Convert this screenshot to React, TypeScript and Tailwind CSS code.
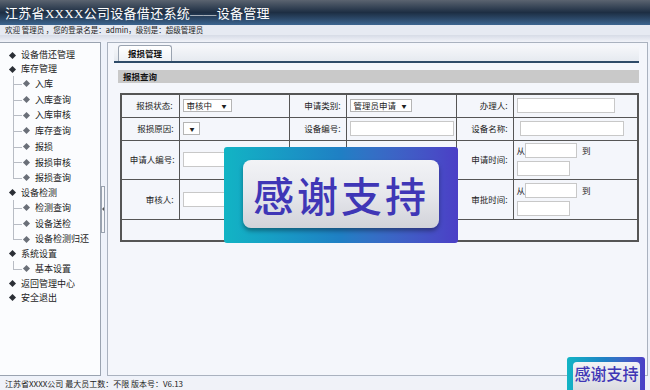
import React from "react";

const font = { fontFamily: '"Noto Sans CJK SC", "Liberation Sans", sans-serif' };

interface MenuNode {
  label: string;
  children?: string[];
}

const menu: MenuNode[] = [
  { label: "设备借还管理" },
  {
    label: "库存管理",
    children: ["入库", "入库查询", "入库审核", "库存查询", "报损", "报损审核", "报损查询"],
  },
  { label: "设备检测", children: ["检测查询", "设备送检", "设备检测归还"] },
  { label: "系统设置", children: ["基本设置"] },
  { label: "返回管理中心" },
  { label: "安全退出" },
];

function Diamond({ small }: { small?: boolean }) {
  return (
    <span
      className={
        small
          ? "inline-block w-[5px] h-[5px] rotate-45 bg-[#6a6f78]"
          : "inline-block w-[5px] h-[5px] rotate-45 bg-[#2b2f36]"
      }
    />
  );
}

function Sidebar() {
  return (
    <div className="w-[106px] h-full bg-[#fbfcfe] border border-[#9aa3b0] border-l-0 pt-[5px] pl-[10px]">
      {menu.map((m) => (
        <div key={m.label}>
          <div className="h-[14px] flex items-center gap-[6px] text-[9px] text-[#222]">
            <Diamond />
            <span>{m.label}</span>
          </div>
          {m.children && (
            <div className="ml-[3px]">
              {m.children.map((c, i) => {
                const last = i === m.children!.length - 1;
                return (
                  <div key={c} className="relative h-[15.7px] flex items-center pl-[11px] gap-[6px] text-[9px] text-[#222]">
                    <span
                      className={
                        last
                          ? "absolute left-0 top-0 h-[8px] border-l border-[#b8bcc4]"
                          : "absolute left-0 top-0 h-full border-l border-[#b8bcc4]"
                      }
                    />
                    <span className="absolute left-0 top-[8px] w-[9px] border-t border-[#b8bcc4]" />
                    <Diamond small />
                    <span>{c}</span>
                  </div>
                );
              })}
            </div>
          )}
        </div>
      ))}
    </div>
  );
}

function Select({ text, w }: { text: string; w: string }) {
  return (
    <div className={`${w} h-[13px] border border-[#b5b5b5] bg-white flex items-center justify-between pl-[3px] pr-[4px] text-[8.5px] text-[#222]`}>
      <span>{text}</span>
      <span className="text-[5px]">▼</span>
    </div>
  );
}

function Input({ w }: { w: string }) {
  return <div className={`${w} h-[15px] border border-[#c8c8c8] bg-white`} />;
}

function Range() {
  return (
    <div className="flex flex-col gap-[3px] pl-[3px] text-[8.5px] text-[#222]">
      <div className="flex items-center">
        <span>从</span>
        <Input w="w-[52px]" />
        <span className="ml-[5px]">到</span>
      </div>
      <Input w="w-[53px]" />
    </div>
  );
}

const td = "border border-[#555] text-[8.5px] text-[#222]";

function QueryTable() {
  return (
    <table className="w-[517px] border-collapse border-2 border-[#555] ml-[2px] mt-[10px] table-fixed">
      <colgroup>
        <col className="w-[58px]" />
        <col className="w-[110px]" />
        <col className="w-[57px]" />
        <col className="w-[110px]" />
        <col className="w-[57px]" />
        <col className="w-[125px]" />
      </colgroup>
      <tbody>
        <tr className="h-[23px]">
          <td className={`${td} text-right pr-[6px]`}>报损状态:</td>
          <td className={`${td} pl-[3px]`}>
            <Select text="审核中" w="w-[49px]" />
          </td>
          <td className={`${td} text-right pr-[5px]`}>申请类别:</td>
          <td className={`${td} pl-[3px]`}>
            <Select text="管理员申请" w="w-[62px]" />
          </td>
          <td className={`${td} text-right pr-[5px]`}>办理人:</td>
          <td className={`${td} pl-[3px]`}>
            <Input w="w-[98px]" />
          </td>
        </tr>
        <tr className="h-[23px]">
          <td className={`${td} text-right pr-[5px]`}>报损原因:</td>
          <td className={`${td} pl-[3px]`}>
            <Select text="" w="w-[17px]" />
          </td>
          <td className={`${td} text-right pr-[5px]`}>设备编号:</td>
          <td className={`${td} pl-[3px]`}>
            <Input w="w-[104px]" />
          </td>
          <td className={`${td} text-right pr-[5px]`}>设备名称:</td>
          <td className={`${td} pl-[6px]`}>
            <Input w="w-[104px]" />
          </td>
        </tr>
        <tr className="h-[39px]">
          <td className={`${td} text-right pr-[4px]`}>申请人编号:</td>
          <td className={`${td} pl-[3px]`}>
            <Input w="w-[104px]" />
          </td>
          <td className={td} />
          <td className={td} />
          <td className={`${td} text-right pr-[5px]`}>申请时间:</td>
          <td className={td}>
            <Range />
          </td>
        </tr>
        <tr className="h-[40px]">
          <td className={`${td} text-right pr-[5px]`}>审核人:</td>
          <td className={`${td} pl-[3px]`}>
            <Input w="w-[104px]" />
          </td>
          <td className={td} />
          <td className={td} />
          <td className={`${td} text-right pr-[5px]`}>审批时间:</td>
          <td className={td}>
            <Range />
          </td>
        </tr>
        <tr className="h-[22px]">
          <td className={td} colSpan={6} />
        </tr>
      </tbody>
    </table>
  );
}

function ThanksBadge({ big }: { big?: boolean }) {
  return big ? (
    <div className="absolute left-[224px] top-[147px] w-[234px] h-[96px] rounded-[3px] bg-gradient-to-r from-[#12b4c4] via-[#1f7fc4] to-[#4b3ec6] p-[13px_19px_15px_19px]">
      <div className="w-full h-full rounded-[8px] bg-gradient-to-b from-[#f2f3f6] via-[#e6e7ec] to-[#d2d3d9] shadow-[0_3px_4px_rgba(0,0,0,0.35)] flex items-center justify-center">
        <span className="text-[41px] leading-none font-medium text-[#3f36b6] tracking-[3px]">感谢支持</span>
      </div>
    </div>
  ) : (
    <div className="absolute left-[567px] top-[357px] w-[78px] h-[40px] rounded-[3px] bg-gradient-to-r from-[#12b4c4] via-[#1f7fc4] to-[#4b3ec6] p-[5px_5px_0_6px]">
      <div className="w-full h-full rounded-[4px] bg-gradient-to-b from-[#f2f3f6] to-[#d6d7dc] flex items-start justify-center pt-[3px]">
        <span className="text-[16px] leading-none font-medium text-[#3f36b6]">感谢支持</span>
      </div>
    </div>
  );
}

export default function App() {
  return (
    <div className="relative w-[650px] h-[390px] overflow-hidden bg-[#eef2fa] flex flex-col" style={font}>
      <div className="h-[25px] bg-gradient-to-b from-[#5b6470] via-[#1d2e43] to-[#3c6590] flex items-center pl-[5px] pt-[2px]">
        <span
          className="text-white text-[13px] leading-none tracking-[0.3px]"
          style={{ fontFamily: '"Liberation Serif", "Noto Sans CJK SC", serif' }}
        >
          江苏省XXXX公司设备借还系统——设备管理
        </span>
      </div>
      <div className="h-[10px] bg-[#e6eaf2] pl-[5px] text-[7.5px] leading-[10px] text-[#222]">
        欢迎 管理员 ，您的登录名是：admin，级别是：超级管理员
      </div>
      <div className="h-[7px] bg-gradient-to-b from-[#d6dbe6] to-[#f1f3f9]" />
      <div className="flex-1 flex min-h-0 pb-[2px]">
        <Sidebar />
        <div className="w-[5px] flex items-center">
          <div className="w-[4px] h-[47px] border border-[#9aa3b0] bg-[#f6f7fa] flex items-center justify-center">
            <span className="w-0 h-0 border-y-[2px] border-y-transparent border-r-[2px] border-r-[#555]" />
          </div>
        </div>
        <div className="flex-1 ml-[1px] mr-[2px] border border-[#aab2bf] bg-[#f4f6fb] pl-[6px] pr-[8px] pt-[3px]">
          <div className="flex items-end h-[17px] border-b-2 border-[#2e4b68] bg-gradient-to-b from-[#f6f7fa] to-[#e6eaf0] pl-[4px]">
            <div className="h-[16px] px-[9px] rounded-t-[3px] border border-b-0 border-[#9aa3b0] bg-gradient-to-b from-white to-[#eef1f5] text-[8.5px] font-bold text-[#111] flex items-center">
              报损管理
            </div>
          </div>
          <div className="pl-[4px] pr-[0px] pt-[7px]">
            <div className="h-[13px] bg-[#c9c9c9] pl-[5px] text-[8.5px] font-bold text-[#111] leading-[13px]">
              报损查询
            </div>
            <QueryTable />
          </div>
        </div>
      </div>
      <div className="h-[12px] pl-[5px] text-[8px] leading-[12px] text-[#222] bg-[#f0f2f8]">
        江苏省XXXX公司 最大员工数：不限 版本号：V6.13
      </div>
      <ThanksBadge big />
      <ThanksBadge />
    </div>
  );
}
